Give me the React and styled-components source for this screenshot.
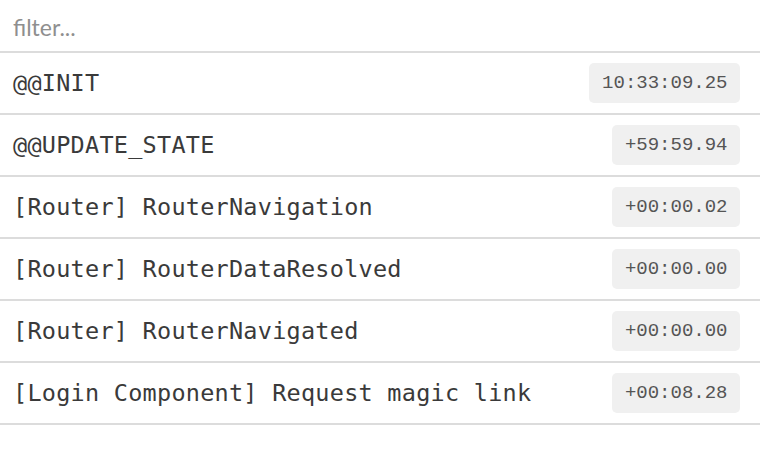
import React from "react";
import styled, { createGlobalStyle } from "styled-components";

const Global = createGlobalStyle`
  html, body { margin: 0; padding: 0; background: #fff; }
  body { width: 760px; height: 462px; overflow: hidden; }
`;

const Panel = styled.div`
  display: flex;
  flex-direction: column;
  width: 760px;
  background: #fff;
`;

const FilterInput = styled.input`
  display: block;
  box-sizing: border-box;
  width: 100%;
  height: 53px;
  margin: 0;
  padding: 3px 13px 0;
  border: none;
  border-bottom: 2px solid #dcdcdc;
  outline: none;
  font-family: Lato, "Open Sans", sans-serif;
  font-size: 23px;
  color: #333;
  background: #fff;
  &::placeholder { color: #8f8f8f; }
`;

const Row = styled.div`
  display: flex;
  align-items: center;
  justify-content: space-between;
  box-sizing: border-box;
  height: 62px;
  padding: 0 20px 0 13px;
  border-bottom: 2px solid #dcdcdc;
`;

const ActionName = styled.span`
  font-family: "DejaVu Sans Mono", "Liberation Mono", monospace;
  font-size: 23.5px;
  color: #3a3a3a;
  white-space: nowrap;
  letter-spacing: 0.25px;
`;

const Time = styled.span`
  display: inline-flex;
  align-items: center;
  height: 40px;
  padding: 0 12.5px 0 13px;
  border-radius: 5px;
  background: #f0f0f0;
  font-family: "Liberation Mono", "DejaVu Sans Mono", monospace;
  font-size: 19px;
  color: #555;
`;

const actions = [
  ["@@INIT", "10:33:09.25"],
  ["@@UPDATE_STATE", "+59:59.94"],
  ["[Router] RouterNavigation", "+00:00.02"],
  ["[Router] RouterDataResolved", "+00:00.00"],
  ["[Router] RouterNavigated", "+00:00.00"],
  ["[Login Component] Request magic link", "+00:08.28"],
];

export default function App() {
  return (
    <>
      <Global />
      <Panel>
        <FilterInput placeholder="filter..." />
        {actions.map(([name, time], i) => (
          <Row key={i}>
            <ActionName>{name}</ActionName>
            <Time>{time}</Time>
          </Row>
        ))}
      </Panel>
    </>
  );
}
